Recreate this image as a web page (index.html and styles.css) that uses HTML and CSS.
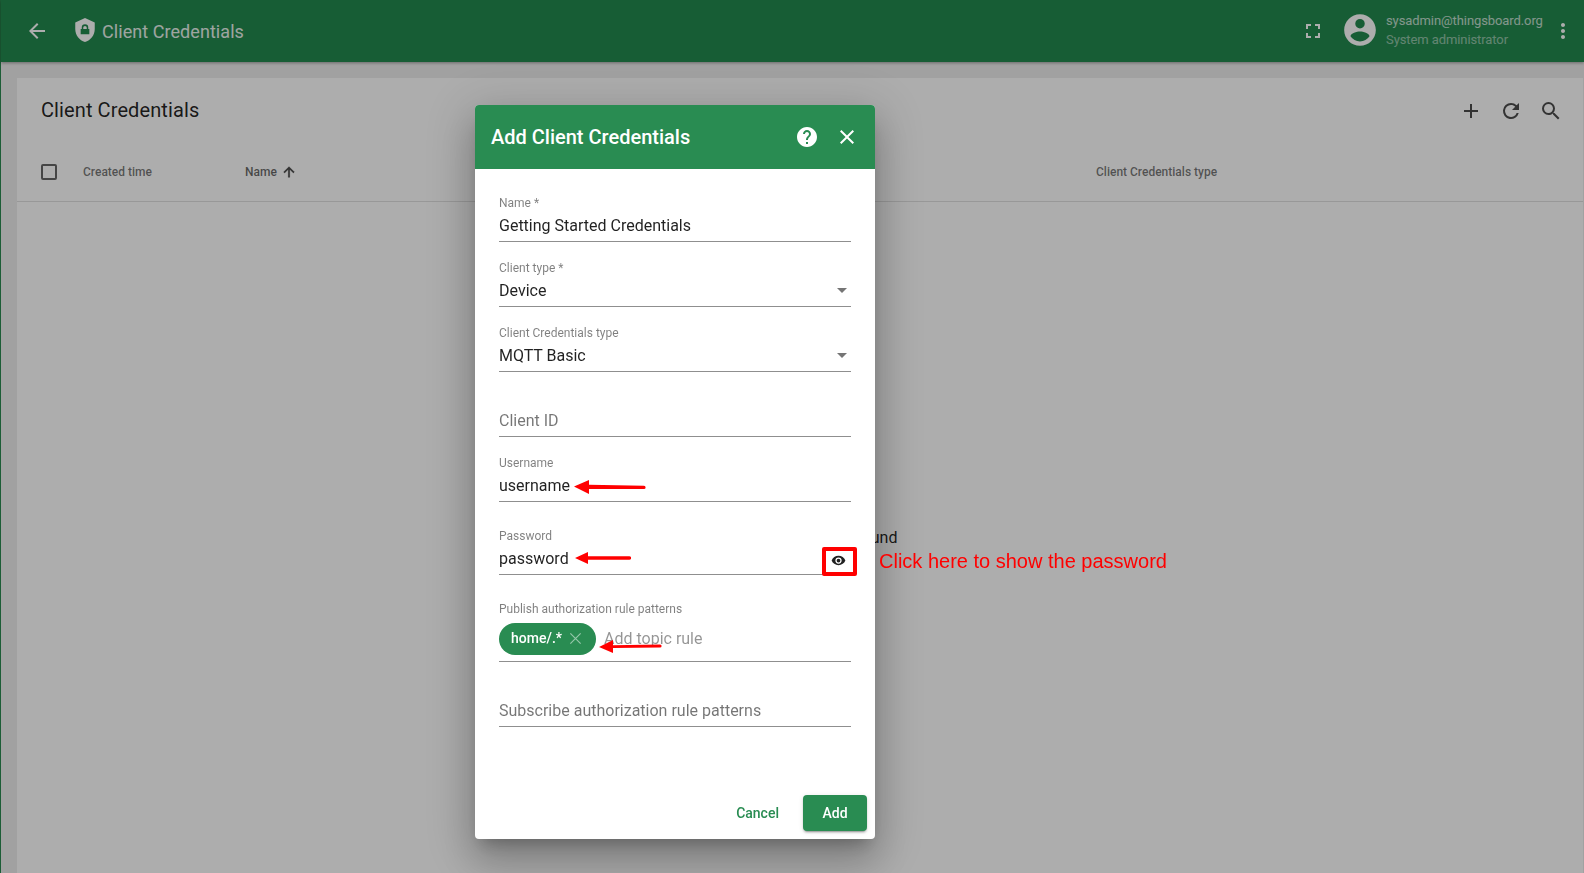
FILE: index.html
```html
<!DOCTYPE html>
<html lang="en">
<head>
<meta charset="utf-8">
<title>Client Credentials</title>
<link rel="stylesheet" href="styles.css">
</head>
<body>
<div class="app">
  <header class="toolbar">
    <button class="icon-btn back"><svg viewBox="0 0 24 24" class="i24"><path fill="currentColor" d="M20 11H7.83l5.59-5.59L12 4l-8 8 8 8 1.41-1.41L7.83 13H20v-2z"/></svg></button>
    <svg viewBox="0 0 24 24" class="i24 shield"><path fill="currentColor" d="M12 1 3 5v6c0 5.55 3.84 10.74 9 12 5.16-1.26 9-6.45 9-12V5l-9-4zm4 15H8v-5h1v-1.2a3 3 0 0 1 6 0V11h1v5zm-2.4-5v-1.2a1.6 1.6 0 0 0-3.2 0V11h3.2z"/></svg>
    <span class="toolbar-title">Client Credentials</span>
    <span class="spacer"></span>
    <svg viewBox="0 0 24 24" class="i24 fullscreen"><path fill="currentColor" d="M7 14H5v5h5v-2H7v-3zm-2-4h2V7h3V5H5v5zm12 7h-3v2h5v-5h-2v3zM14 5v2h3v3h2V5h-5z"/></svg>
    <svg viewBox="0 0 24 24" class="avatar"><path fill="currentColor" d="M12 2C6.48 2 2 6.48 2 12s4.48 10 10 10 10-4.48 10-10S17.52 2 12 2zm0 3a3 3 0 1 1 0 6 3 3 0 0 1 0-6zm0 14.2a7.2 7.2 0 0 1-6-3.22c.03-1.99 4-3.08 6-3.08s5.97 1.09 6 3.08a7.2 7.2 0 0 1-6 3.22z"/></svg>
    <div class="user">
      <div class="user-mail">sysadmin@thingsboard.org</div>
      <div class="user-role">System administrator</div>
    </div>
    <svg viewBox="0 0 24 24" class="i24 more"><path fill="currentColor" d="M12 8c1.1 0 2-.9 2-2s-.9-2-2-2-2 .9-2 2 .9 2 2 2zm0 2c-1.1 0-2 .9-2 2s.9 2 2 2 2-.9 2-2-.9-2-2-2zm0 6c-1.1 0-2 .9-2 2s.9 2 2 2 2-.9 2-2-.9-2-2-2z"/></svg>
  </header>
  <main class="content">
    <section class="card">
      <div class="card-head">
        <h1 class="card-title">Client Credentials</h1>
        <div class="card-actions">
          <svg viewBox="0 0 24 24" class="i24"><path fill="currentColor" d="M19 13h-6v6h-2v-6H5v-2h6V5h2v6h6v2z"/></svg>
          <svg viewBox="0 0 24 24" class="i24"><path fill="currentColor" d="M17.65 6.35A7.96 7.96 0 0 0 12 4a8 8 0 1 0 7.73 10h-2.08A6 6 0 1 1 12 6c1.66 0 3.14.69 4.22 1.78L13 11h7V4l-2.35 2.35z"/></svg>
          <svg viewBox="0 0 24 24" class="i24"><path fill="currentColor" d="M15.5 14h-.79l-.28-.27A6.47 6.47 0 0 0 16 9.5 6.5 6.5 0 1 0 9.5 16c1.61 0 3.09-.59 4.23-1.57l.27.28v.79l5 4.99L20.49 19l-4.99-5zm-6 0C7.01 14 5 11.99 5 9.5S7.01 5 9.5 5 14 7.01 14 9.5 11.99 14 9.5 14z"/></svg>
        </div>
      </div>
      <div class="table-head">
        <span class="checkbox"></span>
        <span>Created time</span>
        <span class="sort-col">Name <svg viewBox="0 0 24 24" class="i16"><path fill="currentColor" stroke="currentColor" stroke-width=".6" d="m4 12 1.41 1.41L11 7.83V20h2V7.83l5.58 5.59L20 12l-8-8-8 8z"/></svg></span>
        <span>Client Credentials type</span>
      </div>
      <div class="empty">No client credentials found</div>
    </section>
  </main>
</div>

<div class="backdrop"></div>

<div class="dialog">
  <div class="dialog-head">
    <h2 class="dialog-title">Add Client Credentials</h2>
    <svg viewBox="0 0 24 24" class="i24 help"><path fill="currentColor" d="M12 2C6.48 2 2 6.48 2 12s4.48 10 10 10 10-4.48 10-10S17.52 2 12 2zm1 17h-2v-2h2v2zm2.07-7.75-.9.92C13.45 12.9 13 13.5 13 15h-2v-.5c0-1.1.45-2.1 1.17-2.83l1.24-1.26c.37-.36.59-.86.59-1.41 0-1.1-.9-2-2-2s-2 .9-2 2H8c0-2.21 1.79-4 4-4s4 1.79 4 4c0 .88-.36 1.68-.93 2.25z"/></svg>
    <svg viewBox="0 0 24 24" class="i24"><path fill="currentColor" d="M19 6.41 17.59 5 12 10.59 6.41 5 5 6.41 10.59 12 5 17.59 6.41 19 12 13.41 17.59 19 19 17.59 13.41 12z"/></svg>
  </div>
  <div class="dialog-body">
    <div class="field">
      <div class="field-label">Name *</div>
      <div class="field-value">Getting Started Credentials</div>
    </div>
    <div class="field">
      <div class="field-label">Client type *</div>
      <div class="field-value select">Device<i class="caret"></i></div>
    </div>
    <div class="field">
      <div class="field-label">Client Credentials type</div>
      <div class="field-value select">MQTT Basic<i class="caret"></i></div>
    </div>
    <div class="field">
      <div class="field-value placeholder">Client ID</div>
    </div>
    <div class="field">
      <div class="field-label">Username</div>
      <div class="field-value">username</div>
    </div>
    <div class="field tall">
      <div class="field-label">Password</div>
      <div class="field-value">password</div>
    </div>
    <div class="field chips-field">
      <div class="field-label">Publish authorization rule patterns</div>
      <div class="chips">
        <span class="chip">home/.*<svg viewBox="0 0 24 24" class="chip-x"><path fill="none" stroke="currentColor" stroke-width="1.5" d="m5.5 5.5 13 13M18.5 5.5l-13 13"/></svg></span>
        <span class="chip-input">Add topic rule</span>
      </div>
    </div>
    <div class="field">
      <div class="field-value placeholder">Subscribe authorization rule patterns</div>
    </div>
  </div>
  <div class="dialog-foot">
    <span class="btn-text">Cancel</span>
    <span class="btn-primary">Add</span>
  </div>
</div>

<svg class="arrow arrow-user" viewBox="0 0 72 14"><path fill="#f00" d="M0 6.5 15 0v4.8l55 1a1.6 1.6 0 0 1 0 3.2L15 9v5z"/></svg>
<svg class="arrow arrow-pass" viewBox="0 0 56 12"><path fill="#f00" d="M0 6 13 0v4.2h41.3a1.8 1.8 0 0 1 0 3.6H13V12z"/></svg>
<svg class="arrow arrow-topic" viewBox="0 0 63 13"><path fill="#f00" d="M0 7 14 0v5.3l47-.9a1.6 1.6 0 0 1 0 3.2L14 8v5z"/></svg>
<div class="eye-box"><svg viewBox="0 0 24 24" class="eye"><path fill="currentColor" d="M12 4.5C7 4.5 2.73 7.61 1 12c1.73 4.39 6 7.5 11 7.5s9.27-3.11 11-7.5c-1.73-4.39-6-7.5-11-7.5zM12 17a5 5 0 1 1 0-10 5 5 0 0 1 0 10zm0-8a3 3 0 1 0 0 6 3 3 0 0 0 0-6z"/></svg></div>
<div class="note">Click here to show the password</div>
</body>
</html>
```
FILE: styles.css
```css
* { box-sizing: border-box; }
html, body { margin: 0; height: 100%; overflow: hidden; }
body { font-family: Roboto, "Liberation Sans", sans-serif; background: #eee; color: rgba(0,0,0,.87); }
h1, h2 { margin: 0; font-weight: 400; }
svg { display: block; flex: none; }
.i24 { width: 24px; height: 24px; }
.i16 { width: 16px; height: 16px; }

.app { height: 100vh; display: flex; flex-direction: column; border-left: 1px solid #2a8a50; }
.toolbar { height: 62px; flex: none; display: flex; align-items: center; background: #238a4f; color: #fff; padding-right: 9px; box-shadow: 0 1px 3px rgba(0,0,0,.35); position: relative; }
.icon-btn { border: 0; background: none; color: inherit; padding: 0; margin-left: 24px; }
.shield { margin-left: 23px; width: 26px; height: 26px; margin-top: -2px; }
.toolbar-title { font-size: 18px; margin-left: 4px; opacity: .9; letter-spacing: .06px; }
.spacer { flex: 1; }
.fullscreen { width: 24px; height: 24px; margin-right: 16px; }
.avatar { width: 38px; height: 38px; margin-right: 7px; margin-top: -2px; }
.user { width: 165px; font-size: 13px; letter-spacing: -.09px; }
.user-mail { line-height: 19px; opacity: .72; margin-top: -2px; }
.user-role { line-height: 19px; opacity: .5; }
.more { margin-right: 0; }

.content { flex: 1; padding: 16px 1px 0 16px; min-height: 0; }
.card { height: 100%; background: #fff; display: flex; flex-direction: column; }
.card-head { height: 64px; flex: none; display: flex; align-items: center; justify-content: space-between; padding: 2px 20px 0 24px; }
.card-title { font-size: 20px; line-height: 24px; letter-spacing: .1px; margin-top: -2px; }
.card-actions { display: flex; gap: 16px; color: rgba(0,0,0,.7); }
.table-head { height: 60px; flex: none; display: grid; grid-template-columns: 42px 162px 851px 1fr; align-items: center; padding-left: 24px; border-bottom: 1px solid rgba(0,0,0,.12); font-size: 12px; font-weight: 500; color: rgba(0,0,0,.54); }
.checkbox { width: 16px; height: 16px; border: 2px solid rgba(0,0,0,.6); border-radius: 2px; }
.sort-col { display: flex; align-items: center; gap: 4px; color: rgba(0,0,0,.6); }
.sort-col svg { color: rgba(0,0,0,.7); }
.empty { flex: 1; display: flex; align-items: center; justify-content: center; font-size: 16px; padding-left: 4px; }

.backdrop { position: fixed; inset: 0; background: rgba(0,0,0,.32); }

.dialog { position: absolute; left: 475px; top: 105px; width: 400px; height: 734px; background: #fff; border-radius: 4px; display: flex; flex-direction: column; overflow: hidden; }
.dialog { box-shadow: 0 11px 15px -7px rgba(0,0,0,.24), 0 24px 38px 3px rgba(0,0,0,.17), 0 9px 46px 8px rgba(0,0,0,.14); }
.dialog-head { height: 64px; flex: none; display: flex; align-items: center; gap: 16px; background: #298c52; color: #fff; padding: 0 16px; }
.dialog-title { font-size: 20px; font-weight: 500; flex: 1; }
.help { margin-right: 0; }
.dialog-body { padding: 8px 24px 0; flex: 1; }
.field { height: 65px; display: flex; flex-direction: column; justify-content: flex-end; border-bottom: 1px solid #8f8f8f; }
.field.tall { height: 73px; }
.field.chips-field { height: 87px; }
.field-label { font-size: 12px; line-height: 14px; color: rgba(0,0,0,.5); margin-bottom: 5px; }
.field-value { font-size: 16px; line-height: 22px; height: 26px; position: relative; }
.placeholder { color: rgba(0,0,0,.54); }
.caret { position: absolute; right: 4px; top: 8px; border: 5px solid transparent; border-top-color: #757575; border-bottom: 0; }
.chips { display: flex; align-items: flex-end; gap: 8px; height: 40px; padding-bottom: 6px; }
.chip { display: flex; align-items: center; gap: 4px; height: 32px; width: 97px; padding: 0 0 2px 12px; border-radius: 16px; background: #298c52; color: #fff; font-size: 14px; font-weight: 500; }
.chip-x { width: 19px; height: 19px; opacity: .5; }
.chip-input { align-self: center; font-size: 16px; color: rgba(0,0,0,.42); }

.dialog-foot { flex: none; display: flex; align-items: center; justify-content: flex-end; padding: 0 8px 8px; gap: 24px; }
.btn-text { font-size: 14px; font-weight: 500; color: #298c52; }
.btn-primary { width: 64px; height: 36px; display: flex; align-items: center; justify-content: center; font-size: 14px; font-weight: 500; color: #fff; background: #298c52; border-radius: 4px; box-shadow: 0 3px 1px -2px rgba(0,0,0,.2), 0 2px 2px rgba(0,0,0,.14), 0 1px 5px rgba(0,0,0,.12); }

.arrow { position: absolute; }
.arrow-user { left: 574px; top: 480px; width: 72px; height: 14px; }
.arrow-pass { left: 575px; top: 552px; width: 56px; height: 12px; }
.arrow-topic { left: 599px; top: 640px; width: 63px; height: 13px; }
.eye-box { position: absolute; left: 822px; top: 547px; width: 35px; height: 29px; border: 4px solid #f00; border-radius: 2px; display: flex; align-items: center; justify-content: center; padding: 0 2px 3px 0; color: rgba(0,0,0,.87); background: #fff; }
.eye { width: 15px; height: 15px; }
.note { position: absolute; left: 879px; top: 549px; font-family: "Liberation Sans", Arial, sans-serif; font-size: 20px; line-height: 24px; color: #f00; }
```
